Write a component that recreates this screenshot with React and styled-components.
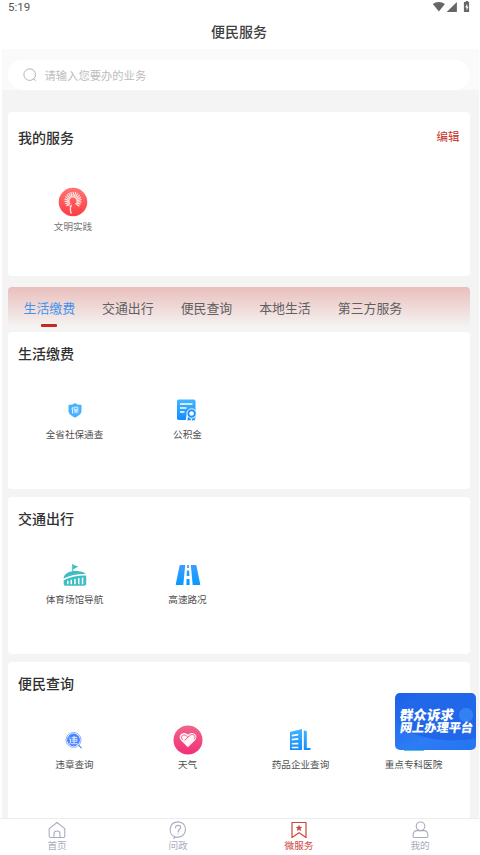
import React from "react";
import styled, { createGlobalStyle } from "styled-components";

const Global = createGlobalStyle`
  * { box-sizing: border-box; }
  body { margin: 0; background: #fff; overflow: hidden; }
  svg { display: block; }
`;

const Screen = styled.div`
  position: relative;
  width: 480px;
  height: 855px;
  display: flex;
  flex-direction: column;
  background: #fff;
  overflow: hidden;
  font-family: "Noto Sans CJK SC", sans-serif;
  color: #333;
`;
const StatusBar = styled.div`
  height: 16px;
  flex: none;
  display: flex;
  justify-content: space-between;
  padding: 0 10px 0 8px;
`;
const Clock = styled.span`
  font: 400 11.5px/15px Roboto, sans-serif;
  color: #555;
`;
const PageTitle = styled.h1`
  margin: 0;
  height: 33px;
  flex: none;
  font-size: 14px;
  font-weight: 500;
  line-height: 31px;
  padding-right: 2px;
  text-align: center;
  color: #404040;
`;
const Content = styled.main`
  flex: 1;
  min-height: 0;
  overflow: hidden;
  margin: 0 1px 0 2px;
  background: #f4f4f4;
`;
const SearchArea = styled.div`
  height: 41px;
  padding: 11px 9px 0 5.5px;
  background: #fafafa;
`;
const SearchBox = styled.div`
  height: 30px;
  border-radius: 15px;
  background: #fff;
  display: flex;
  align-items: center;
  gap: 8px;
  padding: 0 0 1px 15px;
  font-size: 11.3px;
  line-height: 16px;
  color: #bdbdbd;
`;
const Body = styled.div`
  padding: 22px 9px 0 5.5px;
`;
const Card = styled.section`
  height: ${(p) => p.$height}px;
  margin-bottom: ${(p) => p.$gap}px;
  background: #fff;
  border-radius: 4px;
  padding: ${(p) => p.$top}px 10.5px 0;
`;
const CardHead = styled.div`
  display: flex;
  justify-content: space-between;
  align-items: center;
  height: 20px;
`;
const CardTitle = styled.h2`
  margin: 0;
  font-size: 14px;
  line-height: 20px;
  font-weight: 500;
  color: #303030;
`;
const Edit = styled.span`
  font-size: 11.5px;
  line-height: 18px;
  padding-bottom: 2px;
  color: #c9302c;
`;
const ServiceGrid = styled.div`
  display: grid;
  grid-template-columns: repeat(4, 113px);
  margin-top: ${(p) => p.$space}px;
  margin-left: ${(p) => p.$shift || 0}px;
`;
const Service = styled.div`
  display: flex;
  flex-direction: column;
  align-items: center;
`;
const IconSlot = styled.div`
  height: 30px;
  display: flex;
  align-items: center;
`;
const ServiceName = styled.span`
  font-size: 9.6px;
  line-height: 14px;
  margin-top: 1.5px;
  color: ${(p) => (p.$soft ? "#777" : "#505050")};
  white-space: nowrap;
`;
const Tabs = styled.nav`
  height: 40px;
  margin-bottom: 5px;
  border-radius: 4px;
  background: linear-gradient(#e9bfbc, #f5f3f3);
  display: flex;
  gap: 27px;
  padding-left: 16px;
`;
const Tab = styled.span`
  display: flex;
  flex-direction: column;
  align-items: center;
  font-size: 12.9px;
  line-height: 20px;
  padding-top: 11px;
  color: ${(p) => (p.$active ? "#4393ed" : "#606060")};
  &::after {
    content: "";
    display: ${(p) => (p.$active ? "block" : "none")};
    width: 16px;
    height: 3px;
    margin-top: 6px;
    border-radius: 1px;
    background: #c22a22;
  }
`;
const BottomNav = styled.footer`
  height: 37px;
  flex: none;
  border-top: 1px solid #ededed;
  background: #fff;
`;
const NavGrid = styled.div`
  display: grid;
  grid-template-columns: repeat(4, 121px);
  margin-left: -3.5px;
`;
const NavItem = styled.div`
  display: flex;
  flex-direction: column;
  align-items: center;
  padding-top: 2px;
  font-size: 9.6px;
  line-height: 13px;
  color: ${(p) => (p.$active ? "#cb4740" : "#a9abbd")};
`;
const Banner = styled.aside`
  position: absolute;
  left: 395px;
  top: 693px;
  width: 81px;
  height: 57px;
  border-radius: 5px;
  overflow: hidden;
  background:
    radial-gradient(circle at 71px 22px, rgba(66, 151, 252, 0.55) 0 6.5px, transparent 7.5px),
    radial-gradient(ellipse 58px 26px at 58px 22px, #2067e9 0 96%, transparent 100%),
    linear-gradient(155deg, #1b60ea, #2d7cf5 65%, #2473f0);
  padding: 14.5px 0 0 4.5px;
  color: #fff;
`;
const BannerLine = styled.div`
  font-size: ${(p) => p.$size}px;
  line-height: 13.5px;
  font-weight: 900;
  white-space: nowrap;
  transform: skewX(-8deg);
`;

const SearchIcon = () => (
  <svg width="14" height="14" viewBox="0 0 14 14" fill="none" stroke="#b5b5b5" strokeWidth="1">
    <circle cx="6.7" cy="6.6" r="5.8" />
    <path d="M10 10l2.7 2.8" />
  </svg>
);

const StatusIcons = () => (
  <svg width="38" height="14" viewBox="0 0 38 14" fill="#666">
    <path d="M.8 4.1C4.1 1.3 9.6 1.3 12.9 4.1L6.9 11.6z" />
    <path d="M24.9 2v10H14.7z" />
    <path d="M32.8 2h1V1h2.3v1h1v10h-5.2V2zM35.2 3.7l-2 3.7h1.4v3l2-4h-1.4z" fillRule="evenodd" />
  </svg>
);

const petals = Array.from({ length: 17 }, (_, i) => {
  const a = ((-220 + i * 16.5) * Math.PI) / 180;
  return [15 + 4 * Math.cos(a), 14 + 4 * Math.sin(a), 15 + 8.1 * Math.cos(a), 13.4 + 8.1 * Math.sin(a)];
});
const Dandelion = () => (
  <svg width="30" height="30" viewBox="0 0 30 30">
    <defs>
      <linearGradient id="coral" x2="0" y2="1"><stop stopColor="#ff7573" /><stop offset="1" stopColor="#fb3c42" /></linearGradient>
    </defs>
    <circle cx="15" cy="15" r="14.3" fill="url(#coral)" />
    <g stroke="#ffe3e0" strokeWidth="1.25" strokeLinecap="round" fill="none">
      {petals.map(([a, b, c, d], i) => <line key={i} x1={a} y1={b} x2={c} y2={d} />)}
      <path d="M13.3 18.2c-1.4 2.6-1 5.4-.2 8" strokeWidth="1.3" />
      <path d="M12.9 19.5c-1.8-.1-2.5-1-3.2-2" strokeWidth=".8" />
    </g>
  </svg>
);

const Shield = () => (
  <svg width="14" height="16" viewBox="0 0 14 16">
    <path d="M7 .9l1.500 1.100c1.500.8 3 .9 5 .9v6.200c0 3-3 5-6.500 6.700C3.500 14.100.5 12.100.5 9.100V2.900c2 0 3.500-.1 5-.9z" fill="#49b1fb" />
    <g stroke="#e4f5ff" strokeWidth=".9" fill="none">
      <path d="M5 5L3.700 7.300M4.500 6.500v5M6 5.200h4v2.100H6zM5.700 8.800h5M8 7.500v4M7.700 9L6 10.900M8.400 9l1.900 1.900" />
    </g>
  </svg>
);

const FundDoc = () => (
  <svg width="25" height="24" viewBox="0 0 25 24">
    <defs><linearGradient id="azure" x2="0" y2="1"><stop stopColor="#43b5ff" /><stop offset="1" stopColor="#148cff" /></linearGradient></defs>
    <rect x="2" y="1.500" width="18.500" height="20.500" rx="1.800" fill="url(#azure)" />
    <path d="M5 6h12.500M5 10h6.500M5 14h4.500" stroke="#fff" strokeWidth="1.600" />
    <path d="M11.500 17l-.8 6h10.500L19.500 17z" fill="#fff" />
    <path d="M13 18l-.6 4.700 2-.8 1 .9.900-3.300.9 3.300 1-.9 1.900.7-.8-5z" fill="#178fff" />
    <circle cx="16.600" cy="15.500" r="4.700" fill="#1b92ff" stroke="#fff" strokeWidth="1" />
    <circle cx="16.600" cy="15.500" r="2.300" fill="#fff" />
  </svg>
);

const Stadium = () => (
  <svg width="24" height="24" viewBox="0 0 24 24">
    <g fill="#3ebdc3">
      <path d="M9.200 1h1v.8l5 2-4.900 2.400v3H9.200z" />
      <path d="M.6 15.600c0-3.600 4-7 9-7.400 5.800-.6 11.400.6 13.200 2.900-7.700-.2-15.400 1-22.200 4.500z" />
      <path fillRule="evenodd" d="M.7 17.200c7-3.400 14.700-4.800 22.500-4.700v8c0 1.500-.8 2.200-2.300 2.200H2.700c-1.300 0-2-.7-2-2zM4 18.100v3.200h1.500v-3.800zM7.500 17v4.300H9v-4.700zM11.200 16.100v5.200h1.500v-5.600zM15 15.200v6.100h1.500V15zM18.800 14.700v6.600h1.500v-6.800z" />
    </g>
  </svg>
);

const Road = () => (
  <svg width="26" height="22" viewBox="0 0 26 22">
    <defs><linearGradient id="sky" x2="0" y2="1"><stop stopColor="#3c9eff" /><stop offset="1" stopColor="#0799ff" /></linearGradient></defs>
    <path fill="url(#sky)" d="M5.700 1h4.500L8.300 21H1.500C.8 21 .6 20.600.8 20L4.500 2c.2-.7.5-1 1.200-1zM15.800 1h4.500c.7 0 1 .3 1.200 1l3.700 18c.2.600 0 1-.7 1h-6.800zM12.200 1h1.700v3h-1.700zM11.900 6.500h2.300l.2 5.500h-2.700zM11.600 15h2.900l.2 6h-3.300z" />
  </svg>
);

const Violation = () => (
  <svg width="20" height="18" viewBox="0 0 20 18" fill="none" stroke="#3979ff">
    <circle cx="8.500" cy="8.900" r="7.500" strokeWidth=".8" opacity=".75" />
    <circle cx="8.500" cy="8.900" r="5.900" fill="#4884ff" strokeWidth="1" />
    <path d="M13.500 14.200l3 3" strokeWidth="1.100" />
    <g stroke="#fff" strokeWidth=".8">
      <path d="M4.200 5.700l.8.900M4.100 8h1.300v3.600l-1.300 1M5.300 11.700l1.500 1h5.700M6.700 6.400h5.500M6.700 8.200h5.200M6.500 10.200h5.600M9 5v7M12 8.200v2" />
    </g>
  </svg>
);

const Heart = () => (
  <svg width="30" height="30" viewBox="0 0 30 30">
    <defs><linearGradient id="rose" x2="0" y2="1"><stop stopColor="#ef668b" /><stop offset="1" stopColor="#f22f78" /></linearGradient></defs>
    <circle cx="15" cy="15" r="14.500" fill="url(#rose)" />
    <path d="M14.900 22.200L8.300 15.700C3.500 10.700 10.500 5 15 9.800c4.700-4.700 11.600.8 6.700 5.900z" fill="#fff3f6" />
    <path d="M9.300 14.500c-2.800-3.300 1.500-6 4-3.700l1.600 1.500 2.400-2.200c2.700-2 5.700.8 4.400 3.400M14.900 12.300l-3 2.900" stroke="#f15b89" strokeWidth="1" fill="none" strokeLinecap="round" />
  </svg>
);

const Company = () => (
  <svg width="25" height="24" viewBox="0 0 25 24">
    <defs><linearGradient id="tower" x2="0" y2="1"><stop stopColor="#43b5ff" /><stop offset="1" stopColor="#148cff" /></linearGradient></defs>
    <path fill="url(#tower)" fillRule="evenodd" d="M2 4.100L14 1v21H2zM3.800 6.700v1.700l6.500-1V5.700zM3.800 10.800v1.600l6.500-.6v-1.700zM3.800 14.900v1.500h6.500v-1.700zM3.800 18.700v1.500h6.500v-1.500zM15.800 2.300l3 1v16.800h3.700V22h-6.700z" />
  </svg>
);
const Hospital = () => (
  <svg width="22" height="24" viewBox="0 0 22 24" fill="#55c8ce"><path d="M1 5h20v18H1zM8 2h6v3H8z" /></svg>
);

const HomeIcon = () => (
  <svg width="18" height="18" viewBox="0 0 18 18" fill="none" stroke="currentColor" strokeWidth="1.100" strokeLinejoin="round">
    <path d="M1.200 7.600L9 1.500l7.800 6.100v7.500c0 .9-.4 1.400-1.300 1.400h-13c-.9 0-1.300-.5-1.300-1.400zM6 16.300v-3.500c0-3.800 6-3.800 6 0v3.500" />
  </svg>
);
const QuestionIcon = () => (
  <svg width="18" height="18" viewBox="0 0 18 18" fill="none" stroke="currentColor" strokeWidth="1.100" strokeLinecap="round">
    <path d="M5.500 15.600C-1 13.200-.4 1 9 .9c9.800 0 10 14.800.1 15.200H6.700L5 17.200zM6.500 6.700c0-3.400 5.400-3.200 5.200-.2C11.600 8.300 9.100 8.300 9.100 11M9.100 12.700v.2" />
  </svg>
);
const BookmarkIcon = () => (
  <svg width="18" height="18" viewBox="0 0 18 18" fill="none" stroke="currentColor" strokeWidth="1.200" strokeLinejoin="round">
    <path d="M2 1.500h14v15l-7-4.800-7 4.800z" />
    <path d="M9 4.300l.8 1.800 2 .2-1.500 1.300.5 2-1.800-1-1.800 1 .5-2-1.500-1.300 2-.2z" fill="currentColor" strokeWidth=".5" />
  </svg>
);
const UserIcon = () => (
  <svg width="18" height="18" viewBox="0 0 18 18" fill="none" stroke="currentColor" strokeWidth="1.100">
    <circle cx="9.500" cy="5.300" r="4.300" />
    <path d="M5.900 9.600h7.200c2.400 0 3.700 1.800 3.800 5 .1 1.400-.4 1.900-1.700 1.900H3.800c-1.300 0-1.800-.5-1.700-1.900.1-3.200 1.400-5 3.800-5z" />
  </svg>
);

const sections = [
  { title: "生活缴费", items: [["全省社保通查", Shield], ["公积金", FundDoc]] },
  { title: "交通出行", items: [["体育场馆导航", Stadium], ["高速路况", Road]] },
  { title: "便民查询", items: [["违章查询", Violation], ["天气", Heart], ["药品企业查询", Company], ["重点专科医院", Hospital]] },
];
const tabs = ["生活缴费", "交通出行", "便民查询", "本地生活", "第三方服务"];
const navItems = [["首页", HomeIcon], ["问政", QuestionIcon], ["微服务", BookmarkIcon], ["我的", UserIcon]];

function ServiceItem({ name, icon: Icon, soft }) {
  return (
    <Service>
      <IconSlot><Icon /></IconSlot>
      <ServiceName $soft={soft}>{name}</ServiceName>
    </Service>
  );
}

export default function App() {
  return (
    <Screen>
      <Global />
      <StatusBar><Clock>5:19</Clock><StatusIcons /></StatusBar>
      <PageTitle>便民服务</PageTitle>
      <Content>
        <SearchArea>
          <SearchBox><SearchIcon />请输入您要办的业务</SearchBox>
        </SearchArea>
        <Body>
          <Card $height={164} $gap={11} $top={15}>
            <CardHead><CardTitle>我的服务</CardTitle><Edit>编辑</Edit></CardHead>
            <ServiceGrid $space={40} $shift={-1.5}>
              <ServiceItem name="文明实践" icon={Dandelion} soft />
            </ServiceGrid>
          </Card>
          <Tabs>
            {tabs.map((t, i) => <Tab key={t} $active={i === 0}>{t}</Tab>)}
          </Tabs>
          {sections.map((s) => (
            <Card key={s.title} $height={157} $gap={8} $top={10.5}>
              <CardTitle>{s.title}</CardTitle>
              <ServiceGrid $space={32.5}>
                {s.items.map(([name, icon]) => <ServiceItem key={name} name={name} icon={icon} />)}
              </ServiceGrid>
            </Card>
          ))}
        </Body>
      </Content>
      <BottomNav>
        <NavGrid>
          {navItems.map(([name, Icon]) => (
            <NavItem key={name} $active={name === "微服务"}><Icon />{name}</NavItem>
          ))}
        </NavGrid>
      </BottomNav>
      <Banner>
        <BannerLine $size={13.5}>群众诉求</BannerLine>
        <BannerLine $size={12.2}>网上办理平台</BannerLine>
      </Banner>
    </Screen>
  );
}
